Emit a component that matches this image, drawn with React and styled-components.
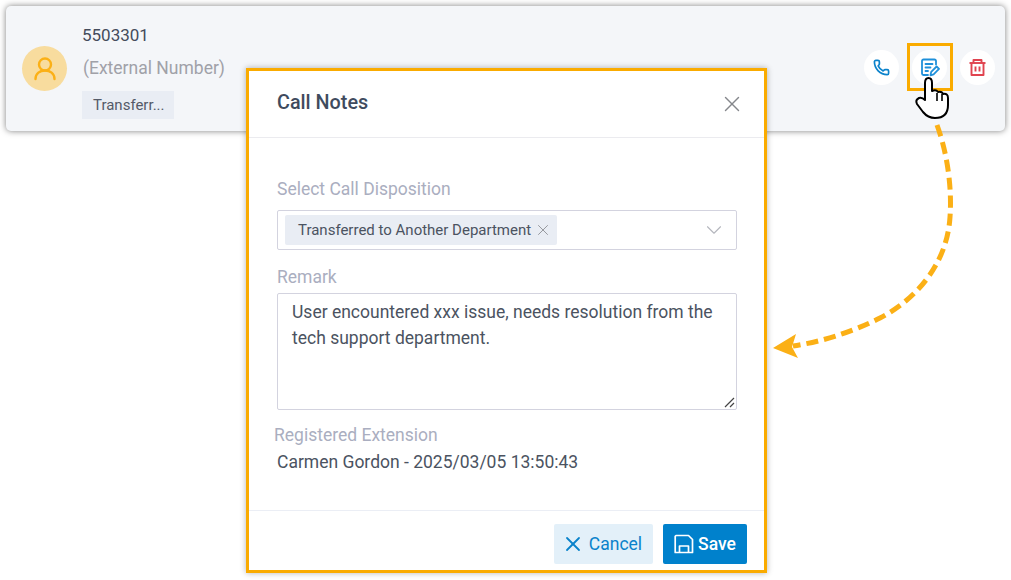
import React from 'react';
import styled, { createGlobalStyle } from 'styled-components';
import { Phone, X, ChevronDown } from 'lucide-react';

const GlobalStyle = createGlobalStyle`
  html, body {
    margin: 0;
    background: #fff;
  }
  * {
    box-sizing: border-box;
  }
`;

const Page = styled.div`
  position: relative;
  width: 1011px;
  height: 580px;
  padding: 6px 6px 0;
  overflow: hidden;
  font-family: Roboto, "Liberation Sans", sans-serif;
  background: #fff;
`;

const ContactCard = styled.div`
  display: flex;
  align-items: center;
  width: 999px;
  height: 125px;
  padding: 0 10px 0 16px;
  background: #f4f6f9;
  border-radius: 5px;
  box-shadow: 0 0 6px rgba(0, 0, 0, 0.5);
`;

const Avatar = styled.div`
  display: flex;
  align-items: center;
  justify-content: center;
  width: 45px;
  height: 45px;
  margin-right: 16px;
  border-radius: 50%;
  background: #f8dc9e;
  color: #fbb016;
`;

const ContactInfo = styled.div`
  display: flex;
  flex-direction: column;
  align-items: flex-start;
  flex: 1;
  margin-top: 7px;
`;

const ContactNumber = styled.div`
  margin-left: -1px;
  font-size: 17px;
  line-height: 20px;
  color: #444c5c;
`;

const ContactType = styled.div`
  margin-top: 13px;
  font-size: 17.5px;
  line-height: 20px;
  color: #a0a1a8;
`;

const ContactTag = styled.div`
  margin-top: 13px;
  margin-left: -1px;
  padding: 0 11px;
  width: 92px;
  height: 28px;
  font-size: 15px;
  line-height: 28px;
  white-space: nowrap;
  color: #545a68;
  background: #e9edf4;
`;

const Actions = styled.div`
  display: flex;
  align-items: center;
  gap: 13px;
  margin-bottom: 2px;
`;

const ActionButton = styled.div`
  display: flex;
  align-items: center;
  justify-content: center;
  width: 35px;
  height: 35px;
  border-radius: 50%;
  background: #fff;
  color: ${(props) => props.$color};
`;

const Highlight = styled.div`
  position: absolute;
  left: 907px;
  top: 43px;
  width: 46px;
  height: 48px;
  border: 3px solid #faab00;
`;

const Overlay = styled.svg`
  position: absolute;
  left: 0;
  top: 0;
  width: 1011px;
  height: 580px;
  pointer-events: none;
`;

const Modal = styled.div`
  position: absolute;
  left: 246px;
  top: 68px;
  display: flex;
  flex-direction: column;
  width: 521px;
  height: 505px;
  background: #fff;
  border: 3px solid #faab00;
  box-shadow: 0 0 6px rgba(0, 0, 0, 0.3);
`;

const ModalHeader = styled.div`
  display: flex;
  align-items: center;
  justify-content: space-between;
  height: 67px;
  padding: 0 19px 4px 28px;
  border-bottom: 1px solid #ebebef;
`;

const ModalTitle = styled.div`
  font-size: 19.8px;
  font-weight: 500;
  color: #3f4b5e;
`;

const CloseIcon = styled(X)`
  color: #85878c;
  margin-top: 3px;
`;

const ModalBody = styled.div`
  flex: 1;
  padding: 40px 27px 0 28px;
`;

const FieldLabel = styled.div`
  height: 24px;
  margin-left: ${(props) => props.$shift || 0}px;
  font-size: 17.5px;
  line-height: 22px;
  color: #aaaec0;
`;

const SelectBox = styled.div`
  display: flex;
  align-items: center;
  justify-content: space-between;
  height: 40px;
  margin: 8px 0 16px;
  padding: 0 9px 0 7px;
  background: #fff;
  border: 1px solid #d3d3df;
  border-radius: 2px;
`;

const SelectedTag = styled.div`
  display: flex;
  align-items: center;
  height: 30px;
  width: 272px;
  padding-left: 13px;
  font-size: 15px;
  white-space: nowrap;
  color: #4b5361;
  background: #e9edf4;
  border-radius: 2px;
`;

const TagRemove = styled(X)`
  margin-left: 3px;
  color: #85878c;
`;

const SelectArrow = styled(ChevronDown)`
  color: #b4b6bd;
`;

const RemarkBox = styled.div`
  position: relative;
  height: 117px;
  margin: 3px 0 14px;
  padding: 5px 14px;
  font-size: 17.5px;
  line-height: 26px;
  color: #4b5361;
  border: 1px solid #d3d3df;
  border-radius: 2px;
`;

const ResizeGrip = styled.svg`
  position: absolute;
  right: 1px;
  bottom: 1px;
`;

const ExtensionValue = styled.div`
  margin-top: 2px;
  font-size: 17.5px;
  line-height: 24px;
  color: #4b5361;
`;

const ModalFooter = styled.div`
  display: flex;
  align-items: flex-start;
  justify-content: flex-end;
  gap: 10px;
  height: 60px;
  padding: 13px 17px 0 0;
  border-top: 1px solid #ebeef5;
`;

const FooterButton = styled.div`
  display: flex;
  align-items: center;
  justify-content: center;
  gap: 4px;
  width: ${(props) => props.$width}px;
  height: 40px;
  font-size: 17.5px;
  font-weight: ${(props) => (props.$primary ? 500 : 400)};
  color: ${(props) => (props.$primary ? '#fff' : '#0a82cb')};
  background: ${(props) => (props.$primary ? '#0081cc' : '#e3f0f9')};
  border-radius: 2px;
`;

const CancelIcon = styled(X)`
  margin-left: -4px;
`;

function UserIcon() {
  return (
    <svg width="22" height="24" viewBox="0 0 22 24" fill="none" stroke="currentColor" strokeWidth="2.4" strokeLinecap="round">
      <circle cx="11" cy="7.5" r="6" />
      <path d="M1.5 22 C1.5 16.5 6 13.5 11 13.5 C16 13.5 20.5 16.5 20.5 22" />
    </svg>
  );
}

function NoteIcon() {
  return (
    <svg width="20" height="19" viewBox="0 0 20 19" fill="none" stroke="currentColor" strokeWidth="1.8" strokeLinecap="round" strokeLinejoin="round">
      <path d="M16 6.5 V3 A1.5 1.5 0 0 0 14.5 1.5 H3.5 A1.5 1.5 0 0 0 2 3 V15.5 A1.5 1.5 0 0 0 3.5 17 H8" />
      <path d="M5.5 6 H12.5 M5.5 9.5 H10.5 M5.5 13 H8" />
      <path d="M10.5 17.3 L11.2 13.9 L16.6 8.5 L19 10.9 L13.6 16.3 Z" />
    </svg>
  );
}

function TrashIcon() {
  return (
    <svg width="17" height="17" viewBox="0 0 17 17" fill="none" stroke="currentColor" strokeWidth="1.9" strokeLinejoin="round">
      <path d="M0.5 4 H16.5" />
      <path d="M4.5 4 V1 H12.5 V4" />
      <path d="M2.5 4 V16 H14.5 V4" />
      <path d="M6.5 7.5 V12.5 M10.5 7.5 V12.5" />
    </svg>
  );
}

function SaveIcon() {
  return (
    <svg width="20" height="20" viewBox="0 0 20 20" fill="none" stroke="currentColor" strokeWidth="1.7" strokeLinejoin="round">
      <path d="M2 1.5 H14.5 L18.5 5.5 V18.5 H1.2 V2.3 Z" />
      <path d="M5.5 18.5 V12 H14.5 V18.5" />
    </svg>
  );
}

export default function App() {
  return (
    <Page>
      <GlobalStyle />
      <ContactCard>
        <Avatar>
          <UserIcon />
        </Avatar>
        <ContactInfo>
          <ContactNumber>5503301</ContactNumber>
          <ContactType>(External Number)</ContactType>
          <ContactTag>Transferr...</ContactTag>
        </ContactInfo>
        <Actions>
          <ActionButton $color="#0a82cb">
            <Phone size={17} strokeWidth={2.4} />
          </ActionButton>
          <ActionButton $color="#1f90da">
            <NoteIcon />
          </ActionButton>
          <ActionButton $color="#e0434f">
            <TrashIcon />
          </ActionButton>
        </Actions>
      </ContactCard>
      <Highlight />
      <Modal>
        <ModalHeader>
          <ModalTitle>Call Notes</ModalTitle>
          <CloseIcon size={26} strokeWidth={1.3} />
        </ModalHeader>
        <ModalBody>
          <FieldLabel>Select Call Disposition</FieldLabel>
          <SelectBox>
            <SelectedTag>
              Transferred to Another Department
              <TagRemove size={18} strokeWidth={1.1} />
            </SelectedTag>
            <SelectArrow size={26} strokeWidth={1} />
          </SelectBox>
          <FieldLabel>Remark</FieldLabel>
          <RemarkBox>
            User encountered xxx issue, needs resolution from the tech support department.
            <ResizeGrip width="12" height="12" viewBox="0 0 12 12">
              <path d="M2 11 L11 2 M7 11 L11 7" stroke="#444" strokeWidth="1.2" />
            </ResizeGrip>
          </RemarkBox>
          <FieldLabel $shift={-3}>Registered Extension</FieldLabel>
          <ExtensionValue>Carmen Gordon - 2025/03/05 13:50:43</ExtensionValue>
        </ModalBody>
        <ModalFooter>
          <FooterButton $width={99}>
            <CancelIcon size={24} strokeWidth={1.8} />
            Cancel
          </FooterButton>
          <FooterButton $primary $width={84}>
            <SaveIcon />
            Save
          </FooterButton>
        </ModalFooter>
      </Modal>
      <Overlay viewBox="0 0 1011 580">
        <path
          d="M937 125 C948 155 952 190 950 217 C947 265 915 300 880 318 C850 333 820 342 793 346"
          fill="none"
          stroke="#fbb016"
          strokeWidth="5"
          strokeDasharray="12 6"
        />
        <path d="M773 348 L796 334 L792 347 L798 358 Z" fill="#fbb016" />
        <path
          d="M925 100 L925 83 Q925 78 928.5 78 Q932 78 932 83 L932 91 Q936 89 938 92 Q942 91 943 94 Q948 93 948 98 L948 105 Q948 118 935 118 Q928 118 923 112 L917 104 Q915 100 919 98 Q922 97 925 100 Z"
          fill="#fff"
          stroke="#000"
          strokeWidth="2"
          strokeLinejoin="round"
        />
        <path d="M937 93 V101 M942 94 V101" fill="none" stroke="#000" strokeWidth="1.6" />
      </Overlay>
    </Page>
  );
}
